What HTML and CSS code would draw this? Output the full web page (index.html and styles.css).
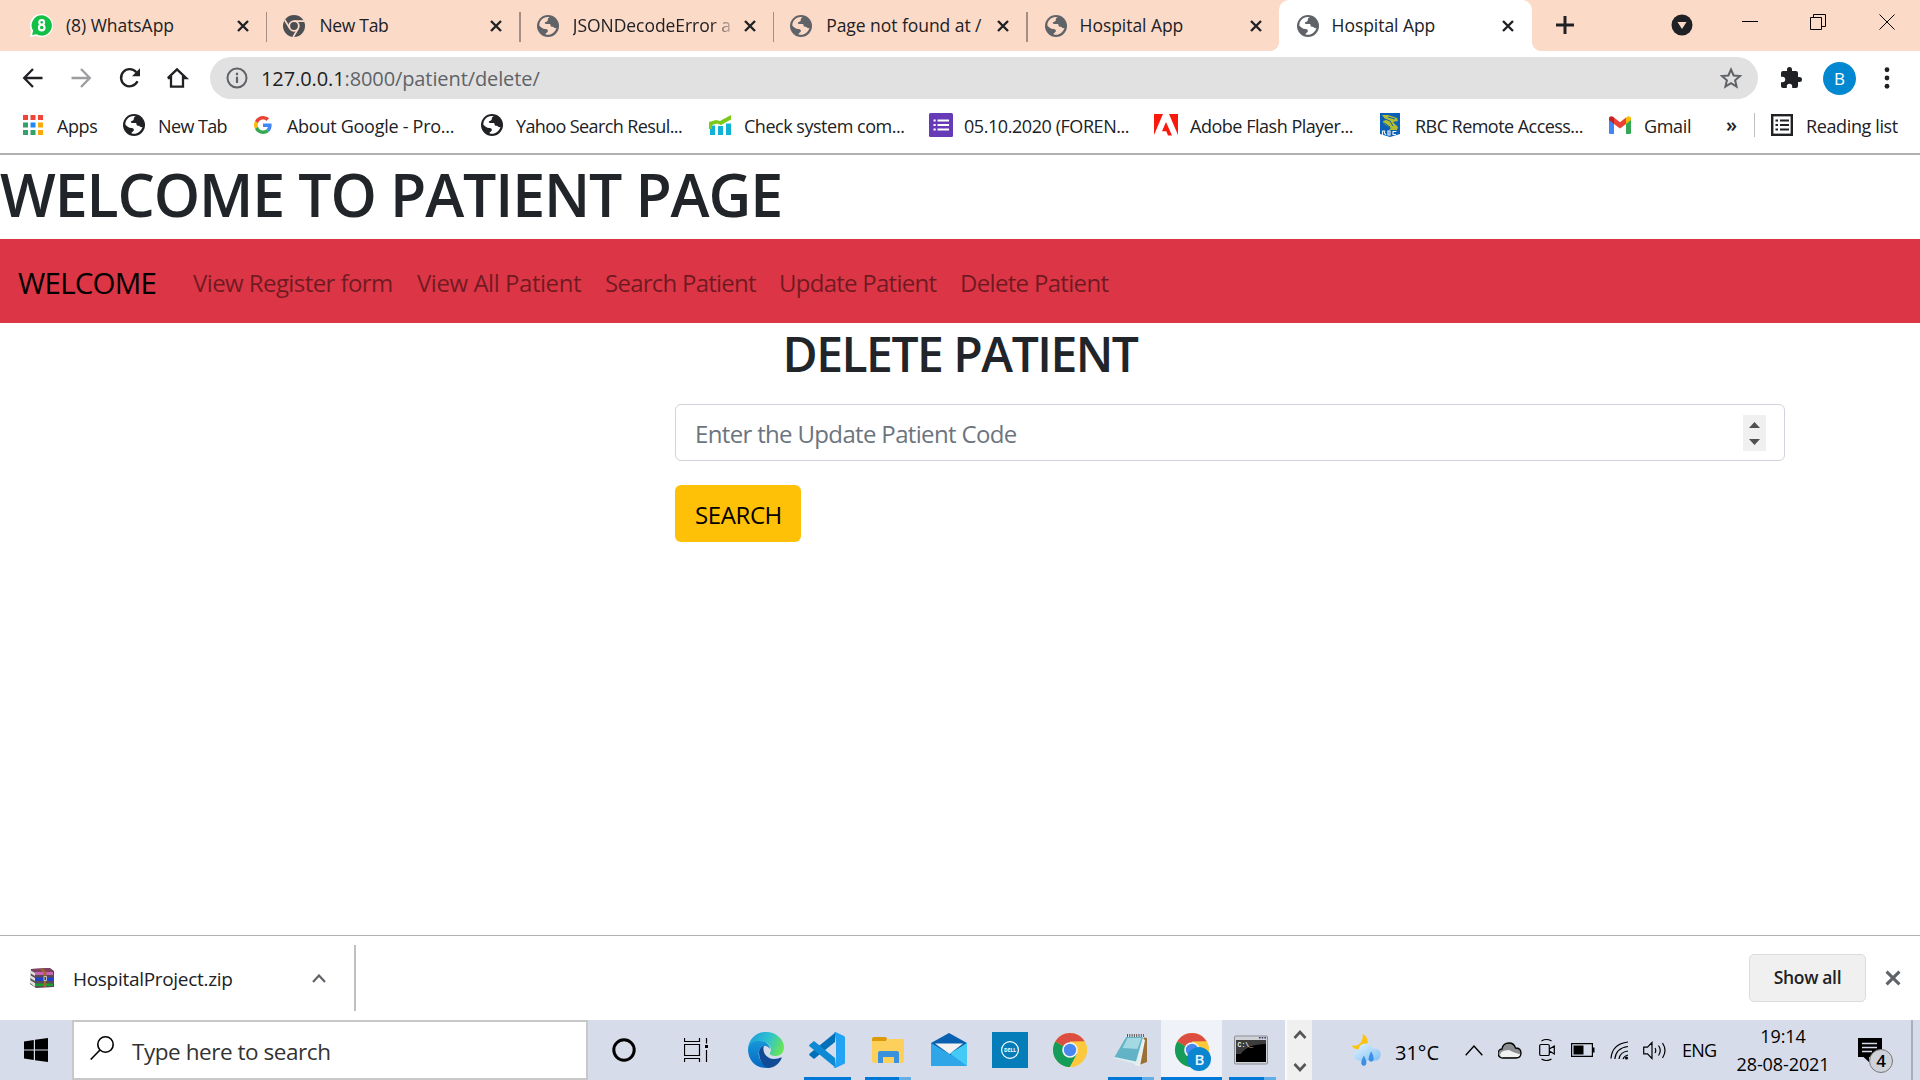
FILE: index.html
```
<!DOCTYPE html>
<html lang="en">
<head>
<meta charset="utf-8">
<title>Hospital App</title>
<link rel="stylesheet" href="styles.css">
</head>
<body>
<svg width="0" height="0" class="defs" aria-hidden="true">
  <symbol id="globe" viewBox="0 0 22 22"><circle cx="11" cy="11" r="11" fill="currentColor"/><path d="M12.800 2.200c-1.200.5-2.200 1.300-2 2.600.1 1-.5 1.800-1.500 2-.9.1-1.500.6-1.500 1.300 0 .8 1 1 2.300 1h2.400c.8 0 1.100.7 1.100 1.500 0 .9.6 1.300 1.500 1.100 1-.2 1.500.1 1.900.8.3.6 1.200.9 2.500.6-.9 3.400-3.600 5.900-7 6.600-1.200.2-3 .1-4-.5.2-.9 1-1.300 1.700-1.900.7-.7.900-1.500.4-2.300-.5-.7-1.400-.9-2.500-1-2.200-.2-3.800-1.200-5.700-3.200C1.900 6.300 6 2 10.600 2z" fill="var(--hole,#fff)"/></symbol>
  <symbol id="x" viewBox="0 0 14 14"><path d="M2 2l10 10M12 2L2 12" stroke="currentColor" stroke-width="2.400" fill="none"/></symbol>
  <symbol id="chrome" viewBox="0 0 34 34"><circle cx="17" cy="17" r="17" fill="#fcca3f"/><path d="M17 17L2.280 8.500A17 17 0 0 1 31.720 8.500L17 9z" fill="#dc4e41"/><path d="M2.280 8.500A17 17 0 0 0 17 34L24 21 17 17 10 13z" fill="#159c58"/><path d="M31.720 8.500H17v8.500l7 4L17 34A17 17 0 0 0 31.720 8.500z" fill="#fdc93c"/><circle cx="17" cy="17" r="7.800" fill="#f4f4f4"/><circle cx="17" cy="17" r="6.200" fill="#4a86f0"/></symbol>
</svg>

<header class="tabstrip">
  <div class="tab">
    <svg class="fav" viewBox="0 0 22 22"><path d="M11 0a11 11 0 1 1-5 20.800L0 22l1.300-5.500A11 11 0 0 1 11 0z" fill="#fff"/><path d="M11.200 1.300a9.700 9.700 0 1 1-5 18L2 20.200l1-4.100a9.700 9.700 0 0 1 8.200-14.800z" fill="#13bf45"/><circle cx="11.200" cy="8" r="2.300" fill="none" stroke="#fff" stroke-width="2"/><circle cx="11.200" cy="13" r="2.700" fill="none" stroke="#fff" stroke-width="2"/></svg>
    <span class="label t1">(8) WhatsApp</span><svg class="close"><use href="#x"/></svg>
  </div>
  <div class="tab">
    <svg class="fav" viewBox="0 0 22 22"><circle cx="11" cy="11" r="11" fill="#4b4e52"/><circle cx="11" cy="11" r="4.800" fill="none" stroke="#fcdac8" stroke-width="1.800"/><path d="M11 6.200H21M6.800 13.400L1.800 5M15.200 13.400L10.200 22" stroke="#fcdac8" stroke-width="1.700"/></svg>
    <span class="label t2">New Tab</span><svg class="close"><use href="#x"/></svg>
  </div>
  <div class="tab"><svg class="fav"><use href="#globe"/></svg><span class="label t3 fade">JSONDecodeError a</span><svg class="close"><use href="#x"/></svg></div>
  <div class="tab"><svg class="fav"><use href="#globe"/></svg><span class="label t4">Page not found at /</span><svg class="close"><use href="#x"/></svg></div>
  <div class="tab last"><svg class="fav"><use href="#globe"/></svg><span class="label t5">Hospital App</span><svg class="close"><use href="#x"/></svg></div>
  <div class="tab active"><svg class="fav"><use href="#globe"/></svg><span class="label t5">Hospital App</span><svg class="close"><use href="#x"/></svg></div>
  <svg class="newtab" viewBox="0 0 18 18"><path d="M9 0v18M0 9h18" stroke="#202124" stroke-width="3"/></svg>
  <svg class="search-tabs" viewBox="0 0 22 22"><circle cx="11" cy="11" r="10.500" fill="#202124"/><path d="M6.500 8h9L11 15z" fill="#fcdac8"/></svg>
  <div class="winbtns">
    <svg viewBox="0 0 16 16"><path d="M0 7.500h16" stroke="#000"/></svg>
    <svg viewBox="0 0 16 16"><path d="M.5 3.500h11v12H.5zM3.500 3.500v-3h12v12h-4" stroke="#000" fill="none"/></svg>
    <svg viewBox="0 0 16 16"><path d="M.5.5l15 15M15.500.5l-15 15" stroke="#000"/></svg>
  </div>
</header>

<div class="toolbar">
  <nav class="navicons">
    <svg viewBox="0 0 20 20"><path d="M19.500 10H1.500M10 1L1.200 10 10 19" stroke="#202124" stroke-width="2.300" fill="none"/></svg>
    <svg viewBox="0 0 20 20"><path d="M.5 10h18M10 1l8.800 9L10 19" stroke="#9b9da0" stroke-width="2.300" fill="none"/></svg>
    <svg viewBox="0 0 20 20"><path d="M18.500 13.300A8.600 8.600 0 1 1 17.300 4.200" stroke="#202124" stroke-width="2.400" fill="none"/><path d="M21 .3v8h-8z" fill="#202124"/></svg>
    <svg viewBox="0 0 20 20"><path d="M4 8v10.700h12V8M.8 10.200L10 1.400l9.200 8.800h-3.200M.8 10.200H4" stroke="#202124" stroke-width="2.300" fill="none"/></svg>
  </nav>
  <div class="omnibox">
    <svg class="info" viewBox="0 0 22 22"><circle cx="11" cy="11" r="9.500" fill="none" stroke="#5f6368" stroke-width="2"/><path d="M11 9.800V16M11 5.800v2.400" stroke="#5f6368" stroke-width="2.200"/></svg>
    <span class="url"><b>127.0.0.1</b>:8000/patient/delete/</span>
    <svg class="star" viewBox="0 0 24 24"><path d="M12 3.500l2.600 6 6.400.6-4.900 4.200 1.500 6.300-5.600-3.400-5.600 3.400 1.500-6.300L3 10.100l6.400-.6z" stroke="#5f6368" stroke-width="2" fill="none"/></svg>
  </div>
  <svg class="puzzle" viewBox="1 1 22 22"><path d="M20.500 11H19V7a2 2 0 0 0-2-2h-4V3.500a2.500 2.500 0 0 0-5 0V5H4a2 2 0 0 0-2 2v3.800h1.500a2.700 2.700 0 0 1 0 5.400H2V20c0 1.100.9 2 2 2h3.800v-1.500a2.700 2.700 0 0 1 5.400 0V22H17a2 2 0 0 0 2-2v-4h1.500a2.500 2.500 0 0 0 0-5z" fill="#202124"/></svg>
  <span class="avatar">B</span>
  <svg class="dots" viewBox="0 0 6 24"><circle cx="3" cy="3" r="2.600"/><circle cx="3" cy="12" r="2.600"/><circle cx="3" cy="21" r="2.600"/></svg>
</div>

<div class="bookmarks">
  <a class="bm b1"><svg viewBox="0 0 20 20"><path d="M0 0h5v5H0zM7.500 0h5v5h-5zM15 0h5v5h-5z" fill="#f04438"/><path d="M0 7.500h5v5H0zM0 15h5v5H0zM7.500 15h5v5h-5z" fill="#34a06a"/><path d="M7.500 7.500h5v5h-5z" fill="#1e88f5"/><path d="M15 7.500h5v5h-5zM15 15h5v5h-5z" fill="#f7ab0b"/></svg><span>Apps</span></a>
  <a class="bm b2"><svg><use href="#globe"/></svg><span>New Tab</span></a>
  <a class="bm b3"><svg viewBox="0 0 48 48"><path fill="#EA4335" d="M24 9.500c3.540 0 6.710 1.220 9.210 3.600l6.850-6.850C35.900 2.380 30.470 0 24 0 14.620 0 6.510 5.380 2.560 13.220l7.980 6.190C12.430 13.720 17.740 9.500 24 9.500z"/><path fill="#4285F4" d="M46.980 24.550c0-1.570-.15-3.090-.38-4.550H24v9.020h12.940c-.58 2.960-2.260 5.480-4.780 7.180l7.730 6c4.510-4.180 7.090-10.360 7.090-17.650z"/><path fill="#FBBC05" d="M10.530 28.590c-.48-1.450-.76-2.990-.76-4.590s.27-3.140.76-4.590l-7.980-6.190C.92 16.460 0 20.120 0 24s.92 7.540 2.560 10.780z"/><path fill="#34A853" d="M24 48c6.480 0 11.930-2.130 15.890-5.810l-7.730-6c-2.150 1.450-4.920 2.300-8.160 2.300-6.260 0-11.570-4.220-13.470-9.910l-7.980 6.190C6.510 42.620 14.620 48 24 48z"/></svg><span>About Google - Pro...</span></a>
  <a class="bm b4"><svg><use href="#globe"/></svg><span>Yahoo Search Resul...</span></a>
  <a class="bm b5"><svg viewBox="0 0 22 20"><path d="M1 10.500h5V20H1zM9 11h5v9H9zM17 8.500h5V20h-5z" fill="#11b3d5"/><path d="M0 7l7-2 4 1L22 0v4.500L12 10 8 8.500 3 10v4H0z" fill="#7ac916"/></svg><span>Check system com...</span></a>
  <a class="bm b6"><svg viewBox="0 0 24 24"><rect width="24" height="24" rx="1.500" fill="#673ab7"/><path d="M8.500 7.500H20M8.500 12H20M8.500 16.500H20M4.500 7.500h2.200M4.500 12h2.200M4.500 16.500h2.200" stroke="#fff" stroke-width="2"/></svg><span>05.10.2020 (FOREN...</span></a>
  <a class="bm b7"><svg viewBox="0 0 24 22"><path d="M0 0h9L0 21zM15 0h9v21zM12 8l6 13.500h-4l-1.700-4.300H8z" fill="#fa1a0d"/></svg><span>Adobe Flash Player...</span></a>
  <a class="bm b8"><svg viewBox="0 0 20 24"><path d="M0 0h20v21l-10 3-10-3z" fill="#0b5fb4"/><path d="M2 2l6 0 9 3 1 3-5 1 5 5-1 3H9l2-2-7-4-1-3 3-1z" fill="#b3bd2e"/><path d="M5 6l5 2 3 5M8 4l7 2M4 10l6 4" stroke="#0b5fb4" fill="none"/><path d="M2.500 22v-4h2v2l1.500 2M8 22v-4h2v4zM16.500 18.500h-3.500v3h3" stroke="#e8f0fa" stroke-width="1.200" fill="none"/></svg><span>RBC Remote Access...</span></a>
  <a class="bm b9"><svg viewBox="0 0 22 18" preserveAspectRatio="none"><path d="M0 3v14q0 1 1 1h4V7z" fill="#4285f4"/><path d="M22 3v14q0 1-1 1h-4V7z" fill="#34a853"/><path d="M17 2v6l5-4V2.500C22 .3 19.500-.5 18 .7z" fill="#fbbc04"/><path d="M5 8V1.500l6 4.700 6-4.700V8l-6 4.500z" fill="#ea4335"/><path d="M0 2.500V4l5 4V1.500L4 .7C2.400-.5 0 .3 0 2.500z" fill="#c5221f"/></svg><span>Gmail</span></a>
  <span class="more">»</span>
  <a class="bm reading"><svg viewBox="0 0 22 22"><rect x="1.200" y="1.200" width="19.600" height="19.600" fill="none" stroke="#202124" stroke-width="2.400"/><path d="M9 6.500h9M9 11h9M9 15.500h9M4.500 6.500H7M4.500 11H7M4.500 15.500H7" stroke="#202124" stroke-width="2.200"/></svg><span>Reading list</span></a>
</div>

<main class="page">
  <h1>WELCOME TO PATIENT PAGE</h1>
  <nav class="navbar">
    <a class="brand">WELCOME</a>
    <a class="n1">View Register form</a><a class="n2">View All Patient</a><a class="n3">Search Patient</a><a class="n4">Update Patient</a><a class="n5">Delete Patient</a>
  </nav>
  <h2>DELETE PATIENT</h2>
  <form class="form">
    <div class="field"><span class="ph">Enter the Update Patient Code</span>
      <svg class="spin" viewBox="0 0 23 36"><rect width="23" height="36" fill="#f0f0f0"/><path d="M6 13h11l-5.500-6zM6 24h11l-5.500 6z" fill="#505050"/></svg></div>
    <div class="btn"><span>SEARCH</span></div>
  </form>
</main>

<footer class="downloads">
  <svg class="zip" viewBox="0 0 24 20"><path d="M1 1l19-1 4 3v16l-18 1-6-4z" fill="#5b4a52"/><path d="M1 1l18-1 4 3v3H6z" fill="#80405f"/><path d="M5 4h18v3H5z" fill="#c763b5"/><path d="M5 9.500h18v3.500H5z" fill="#2040d0"/><path d="M5 15.500h18V18H5z" fill="#16a030"/><path d="M0 2l5 3v3L0 5zM0 7l5 3v3L0 10zM0 12l5 3v4l-5-4z" fill="#e0e0e0"/><path d="M11 1l4 3v15" stroke="#a8622c" stroke-width="2.400" fill="none"/><path d="M14 8.500h2.500v4H14z" fill="#444" stroke="#ddd" stroke-width=".8"/></svg>
  <span class="file">HospitalProject.zip</span>
  <svg class="caret" viewBox="0 0 14 9"><path d="M1 8l6-6.500L13 8" stroke="#5f6368" stroke-width="2.200" fill="none"/></svg>
  <span class="showall"><span>Show all</span></span>
  <svg class="dclose"><use href="#x"/></svg>
</footer>

<div class="taskbar">
  <div class="start"><svg viewBox="0 0 24 24"><path d="M0 3.400L9.800 2v9.500H0zM11 1.800L24 0v11.500H11zM0 12.500h9.800V22L0 20.600zM11 12.500h13V24l-13-1.800z"/></svg></div>
  <div class="searchbox"><svg viewBox="0 0 24 24"><circle cx="15.500" cy="8.500" r="7.700" fill="none" stroke="#000" stroke-width="1.600"/><path d="M10 14L.7 23.500" stroke="#000" stroke-width="1.600"/></svg><span>Type here to search</span></div>
  <div class="sys"><svg viewBox="0 0 24 24"><circle cx="12" cy="12" r="10.200" fill="none" stroke="#000" stroke-width="3"/></svg></div>
  <div class="sys view"><svg viewBox="0 0 24 24"><path d="M.5 0v3.500h15V0M.5 6.500h15v11H.5zM.5 24v-3.500h15V24M22.500 0v5.500M22.500 12v12" fill="none" stroke="#000" stroke-width="1.200"/><path d="M21 7h3v3h-3z"/></svg></div>
  <div class="apps">
    <div class="app"><svg viewBox="0 0 36 36"><defs><linearGradient id="eg" x1="0" x2="1" y1=".2" y2=".5"><stop stop-color="#1c9bdc"/><stop offset=".55" stop-color="#30c2d0"/><stop offset="1" stop-color="#66e45a"/></linearGradient><linearGradient id="eb" x1="0" x2="0" y1="0" y2="1"><stop stop-color="#1797d8"/><stop offset="1" stop-color="#0568c4"/></linearGradient></defs><path d="M0 17C1 6 9 0 18 0c11 0 18 8 18 15 0 6-4 9-8.500 9-5 0-6.500-2-5.300-3.700C24 17 22 11 15 10 8 9 3 12 0 17z" fill="url(#eg)"/><path d="M0 17.500C1 11 7 8.500 12 9c6 .4 10 4 10 8-1-2-3.500-3.500-6-3-4 1-6 5-5 10 1 6 6 10 11 11.500C9 38 0 29 0 17.500z" fill="url(#eb)"/><path d="M11 21c0-4 2-6.500 5-7-2 4 1 13 10 13 3 0 5-.9 7-1.500.7-.2.900.3.500 1C31 32 26 36 20 36c-5-2-9-8-9-15z" fill="#114a95"/></svg></div>
    <div class="app run"><svg viewBox="0 0 36 36"><path d="M27 0l-1 10L5 27l-4.300-3.600a1.500 1.500 0 0 1 0-2z" fill="#0071b8"/><path d="M27 36l-1-10L5 9 .7 12.400a1.500 1.500 0 0 0 0 2.200z" fill="#0d8ad3"/><path d="M25 .5q1-.8 2-.3L35 4q1 .5 1 1.500v25q0 1-1 1.500l-8 3.800q-1.500.5-2.500-.7L27 34V2z" fill="#23a3f4"/></svg><i></i></div>
    <div class="app run multi"><svg viewBox="0 0 36 36"><path d="M2 7q0-2 2-2h11q2 0 2 2l-2 4H2z" fill="#dd9a06"/><path d="M2 9h14l2-2h16v22q0 2-2 2H4q-2 0-2-2z" fill="#fcd05a"/><path d="M8 31V21q0-2 2-2h17q2 0 2 2v10h-5v-6H13v6z" fill="#3a91dc"/></svg><i></i></div>
    <div class="app"><svg viewBox="0 0 36 36"><path d="M0 11L18 1l18 10v22H0z" fill="#0a60b0"/><path d="M0 11l20 12L36 11v23H0z" fill="#2fa6e8"/><path d="M36 11L19 21.500 36 34z" fill="#43cbf6"/><path d="M4 11.500h28L18.500 22z" fill="#f2f2f2"/></svg></div>
    <div class="app"><svg viewBox="0 0 36 36"><path d="M0 0h36v36H0z" fill="#047db9"/><circle cx="18" cy="18" r="8.400" fill="none" stroke="#fff" stroke-width="1.200"/><text x="18" y="20.200" class="dell" textLength="12">DELL</text></svg></div>
    <div class="app"><svg class="c34"><use href="#chrome"/></svg></div>
    <div class="app run multi"><svg viewBox="0 0 36 36"><path d="M29 5l5 1v24l-8 3z" fill="#9a7138"/><path d="M27 5l5 3-5 26-5-1z" fill="#f2f2ee"/><path d="M13 4h18l-5 29L1 26z" fill="#dfeef0"/><path d="M13 5h17l-7 24.500L1.500 25z" fill="#62b3c5"/><path d="M14.500 6h14l-4 11-15-1z" fill="#a3d9e2"/><path d="M14 3.500h17" stroke="#555" stroke-width="3" stroke-dasharray="1 1.300"/></svg><i></i></div>
    <div class="app run current"><svg class="c34"><use href="#chrome"/></svg><b>B</b><i></i></div>
    <div class="app run multi cmdapp"><svg viewBox="0 0 36 36"><rect x="1.500" y="4" width="33" height="28" rx="1" fill="#cfd2d6" stroke="#8b8e92"/><path d="M3 8h30v22H3z"/><path d="M3 8h30v4Q14 12 8 22H3z" fill="#3c3c3c"/><text x="4.500" y="15" class="cmd">C:\_</text><path d="M26 5.800h7" stroke="#336" stroke-width="1.500" stroke-dasharray="1.500 1.200"/></svg><i></i></div>
  </div>
  <div class="scroll"><svg viewBox="0 0 14 9"><path d="M1.500 8L7 2l5.500 6" stroke="#555" stroke-width="2.600" fill="none"/></svg><svg viewBox="0 0 14 9"><path d="M1.500 1L7 7l5.500-6" stroke="#555" stroke-width="2.600" fill="none"/></svg></div>
  <div class="tray">
    <svg class="weather" viewBox="0 0 34 37"><defs><linearGradient id="wc" x1="0" x2="1" y1="0" y2="1"><stop stop-color="#e4f4ff"/><stop offset="1" stop-color="#7fc0f5"/></linearGradient></defs><path d="M13 0q6 3 6 9 0 9-9 9-7 0-10-5 7 2 10.500-2.500Q14 6 13 0z" fill="#fbc30f"/><path d="M10 31q-7 0-7.500-6 0-5.500 5.500-6 1-8 9-8 6 0 8 6 8-1 9 6 0 8-8 8z" fill="url(#wc)"/><path d="M14.500 25q6 11 0 12-6-1 0-12zM23 20q6 11 0 12-6-1 0-12z" fill="#3b8fe6"/></svg>
    <span class="temp">31°C</span>
    <svg class="up" viewBox="0 0 18 11"><path d="M.7 10.300L9 1l8.300 9.300" fill="none" stroke="#000" stroke-width="1.400"/></svg>
    <svg class="cloud" viewBox="0 0 24 17"><path d="M5 16a4.400 4.400 0 0 1-1-9Q5 1 11 1q5 0 6.500 5 5.500 0 5.500 5t-5 5z" fill="#8b8d90"/><path d="M2 12.500q1.500-3.500 5-4l4-.5 4 2 7.500 2.500q-1 3-4 3H5q-2.500 0-3-3z" fill="#f1f1f1"/><path d="M5 16a4.400 4.400 0 0 1-1-9Q5 1 11 1q5 0 6.500 5 5.500 0 5.500 5t-5 5z" fill="none" stroke="#000" stroke-width="1.300"/></svg>
    <svg class="meet" viewBox="0 0 16 22"><path d="M2.500 2q5-3 10 0M2.500 20q5 3 10 0M2 5.500h7q1.300 0 1.300 1.300v8.400q0 1.300-1.300 1.300H2q-1.300 0-1.300-1.300V6.800Q.7 5.500 2 5.500zM10.300 10l5-3v8l-5-3" fill="none" stroke="#000" stroke-width="1.200"/></svg>
    <svg class="batt" viewBox="0 0 24 14"><path d="M.6.600h20.800v12.800H.6z" fill="none" stroke="#000" stroke-width="1.200"/><path d="M2.500 2.500h10v9h-10zM22 4.500h1.500v5H22z"/></svg>
    <svg class="wifi" viewBox="0 0 19 19"><path d="M1 17.500Q2 3 18 1M4.800 18Q6 7 18 5.500M9 18q1-7 9-8M13 18q1-3 5-4" fill="none" stroke="#000" stroke-width="1.200"/><circle cx="16.500" cy="17" r="1.600"/></svg>
    <svg class="snd" viewBox="0 0 24 19"><path d="M.7 6.200h3.800L9 1.500v16l-4.500-4.700H.7zM12 7q1.500 2.500 0 5M15.500 4.500q3.500 5 0 10M19.500 2q5 7.500 0 15" fill="none" stroke="#000" stroke-width="1.200"/></svg>
    <span class="eng">ENG</span>
    <div class="clock"><span>19:14</span><span class="date">28-08-2021</span></div>
    <div class="notif"><svg viewBox="0 0 24 24"><path d="M0 0h24v19H11v5l-5.500-5H0z"/><path d="M4 5.500h15M4 9.500h15M4 13.500h10" stroke="#d6dcea" stroke-width="1.300"/></svg><b>4</b></div>
  </div>
</div>
</body>
</html>
```
FILE: styles.css
```
* { box-sizing: border-box; }
body { margin: 0; width: 1920px; height: 1080px; overflow: hidden; display: flex; flex-direction: column; background: #fff; color: #202124; font-family: "Open Sans", "Noto Sans", sans-serif; font-size: 18px; white-space: nowrap; }
svg { display: block; flex: none; }
.defs { position: absolute; }

/* tab strip */
.tabstrip { height: 51px; flex: none; display: flex; background: #fcdac8; padding-left: 14px; --hole: #fcdac8; }
.tab { width: 253.400px; height: 51px; flex: none; display: flex; align-items: center; padding: 0 16px; position: relative; }
.tab::after { content: ""; position: absolute; right: 0; top: 12px; width: 1.500px; height: 30px; background: #a58f85; }
.tab.last::after, .tab.active::after { display: none; }
.fav { width: 22px; height: 22px; color: #5f6368; }
.tab:first-child .fav { width: 23px; height: 23px; margin-right: -1px; }
.label { width: 163px; margin: -1px 0 0 14px; line-height: 30px; font-size: 17.500px; letter-spacing: -.05px; }
.t2 { letter-spacing: -.3px; }
.fade { -webkit-mask-image: linear-gradient(90deg, #000 138px, transparent 164px); mask-image: linear-gradient(90deg, #000 138px, transparent 164px); }
.close { width: 14px; height: 14px; margin-left: 7px; }
.tab.last { width: 251px; padding: 0 12px 0 17px; }
.tab.last .label { width: 162px; margin-left: 13px; }
.tab.active { width: 253px; padding: 0 16px 0 18px; background: #fff; border-radius: 10px 10px 0 0; --hole: #fff; }
.tab.active .label { width: 162px; margin-left: 13px; }
.active::before { content: ""; position: absolute; bottom: 0; left: -10px; right: -10px; height: 10px; background: radial-gradient(circle at 0 0, transparent 10px, #fff 10.500px) left / 10px 10px no-repeat, radial-gradient(circle at 10px 0, transparent 10px, #fff 10.500px) right / 10px 10px no-repeat; }
.newtab { width: 18px; height: 18px; margin: 16px 0 0 24px; }
.search-tabs { width: 22px; height: 22px; margin: 14px 0 0 97px; }
.winbtns { display: flex; gap: 52.500px; margin: 14px 0 0 49px; }
.winbtns svg { width: 16px; height: 16px; }

/* toolbar */
.toolbar { height: 54px; flex: none; display: flex; align-items: center; padding-left: 23px; }
.navicons { display: flex; gap: 28px; width: 187px; }
.navicons svg { width: 20px; height: 20px; overflow: visible; }
.omnibox { width: 1548px; height: 42px; border-radius: 21px; background: #e1e1e1; display: flex; align-items: center; padding: 0 15px 0 16px; }
.info { width: 22px; height: 22px; }
.url { flex: 1; margin-left: 13px; font-size: 20px; letter-spacing: -.1px; color: #5f6368; }
.url b { font-weight: 400; color: #202124; }
.star { width: 24px; height: 26px; }
.puzzle { width: 22px; height: 22px; margin-left: 22px; }
.avatar { width: 33px; height: 33px; margin-left: 21px; border-radius: 50%; background: #0288d1; color: #fff; font-size: 17px; line-height: 33px; text-align: center; }
.dots { width: 6px; height: 22px; margin-left: 28px; fill: #202124; }

/* bookmarks */
.bookmarks { height: 50px; flex: none; display: flex; align-items: center; padding: 0 0 8px 23px; border-bottom: 2px solid #b1b1b1; letter-spacing: -.48px; }
.bm { display: flex; align-items: center; flex: none; }
.bm span { margin-top: 1px; }
.bm svg { width: 22px; height: 22px; margin-right: 13px; }
.b1 { width: 100px; letter-spacing: -.4px; } .b1 svg { width: 20px; height: 20px; margin-right: 14px; }
.b2 { width: 129px; letter-spacing: -.6px; }
.b3 { width: 229px; letter-spacing: -.27px; } .b3 svg { width: 18px; height: 18px; margin: 0 15px 0 2px; }
.b4 { width: 228px; letter-spacing: -.6px; }
.b5 { width: 220px; } .b5 svg { height: 20px; }
.b6 { width: 225px; letter-spacing: -.44px; } .b6 svg { width: 24px; height: 24px; margin-right: 11px; }
.b7 { width: 226px; } .b7 svg { width: 24px; margin-right: 12px; }
.b8 { width: 229px; letter-spacing: -.54px; } .b8 svg { width: 20px; height: 24px; margin-right: 15px; }
.b9 { width: 117px; letter-spacing: -.35px; } .b9 svg { height: 18px; }
.more { width: 28px; font-size: 20px; font-weight: 600; line-height: 20px; }
.reading { height: 24px; border-left: 1.500px solid #c0c0c0; padding-left: 16px; letter-spacing: -.38px; }

/* page */
.page { height: 780px; flex: none; color: #212529; }
h1 { margin: 0; height: 84px; font-size: 59px; font-weight: 600; line-height: 78px; letter-spacing: -1.120px; }
.navbar { height: 84px; background: #dc3545; display: flex; align-items: center; padding: 2px 0 0 18px; font-size: 24px; color: rgba(0,0,0,.5); }
.navbar a { flex: none; }
.brand { width: 175px; font-size: 29.500px; letter-spacing: -.75px; color: #000; }
.n1 { width: 224px; letter-spacing: -.58px; } .n2 { width: 188px; letter-spacing: -.46px; } .n3 { width: 174px; letter-spacing: -.75px; } .n4 { width: 181px; letter-spacing: -.74px; } .n5 { letter-spacing: -.68px; }
h2 { margin: 0; height: 81px; font-size: 48px; font-weight: 600; line-height: 61px; text-align: center; letter-spacing: -1.480px; }
.form { margin-left: 675px; width: 1110px; font-size: 24px; }
.field { height: 57px; border: 1.500px solid #ced4da; border-radius: 6px; padding: 1px 18px 0 19px; display: flex; align-items: center; justify-content: space-between; color: #6c757d; letter-spacing: -.66px; }
.spin { width: 23px; height: 36px; margin-top: -1px; }
.btn { margin-top: 24px; width: 126px; height: 57px; border-radius: 6px; background: #ffc107; color: #000; padding: 2px 0 0 20px; line-height: 55px; letter-spacing: -.4px; }

/* download shelf */
.downloads { height: 85px; flex: none; border-top: 1px solid #b0b0b0; display: flex; align-items: center; padding-left: 30px; }
.zip { width: 24px; height: 20px; }
.file { margin-left: 19px; width: 239px; font-size: 19px; padding-top: 2px; letter-spacing: -.3px; }
.caret { width: 14px; height: 9px; }
.downloads::before { content: ""; order: 1; margin-left: 28px; width: 2px; height: 66px; background: #c0c0c0; }
.showall, .dclose { order: 2; }
.showall { margin: -1px 0 0 1393px; width: 117px; height: 48px; border: 1px solid #dadce0; border-radius: 5px; background: #f0f0f0; text-align: center; line-height: 45px; font-size: 17.500px; font-weight: 600; letter-spacing: -.35px; }
.dclose { width: 18px; height: 18px; margin-left: 18px; color: #5f6368; }

/* taskbar */
.taskbar { height: 60px; flex: none; background: #d6dcea; display: flex; color: #000; }
.start { width: 72px; padding: 18px 0 0 24px; }
.start svg { width: 24px; height: 24px; }
.searchbox { width: 516px; background: #fff; border: 2px solid #c8c8c8; display: flex; align-items: center; padding: 2px 0 0 16px; font-size: 22.500px; letter-spacing: -.45px; color: #333; }
.searchbox svg { width: 24px; height: 24px; margin: -7px 18px 0 0; }
.sys { width: 72px; padding: 18px 0 0 24px; }
.sys svg { width: 24px; height: 24px; }
.view { width: 76px; }
.apps { display: flex; width: 547px; }
.app { flex: 1; position: relative; display: flex; align-items: center; justify-content: center; }
.app svg { width: 36px; height: 36px; }
.app svg.c34 { width: 34px; height: 34px; }
.app i { position: absolute; bottom: 0; left: 7px; right: 7px; height: 3px; background: #0078d7; }
.multi i { border-right: 12px solid #63aee6; }
.cmdapp svg { margin-left: -3px; }
.current { background: #eff2f9; }
.current i { left: 0; right: 0; }
.current b { position: absolute; left: 26px; top: 27px; width: 24px; height: 24px; border-radius: 50%; background: #0a86d0; color: #e8f4ff; font-size: 15px; font-weight: 600; line-height: 24px; text-align: center; }
.dell { font: 700 5px "Open Sans", sans-serif; fill: #fff; text-anchor: middle; }
.cmd { font: 700 6.500px "Liberation Mono", monospace; fill: #eee; }
.scroll { width: 27px; margin-left: 2px; background: #f0f0f0; border-left: 2px solid #fafafa; display: flex; flex-direction: column; justify-content: space-between; align-items: center; padding: 10px 0 8px; }
.scroll svg { width: 14px; height: 9px; }
.tray { flex: 1; display: flex; align-items: center; padding-left: 37px; }
.weather { width: 34px; height: 32px; }
.temp { width: 70px; margin-left: 12px; font-size: 20px; padding-top: 4px; }
.up { width: 18px; height: 11px; }
.cloud { width: 24px; height: 17px; margin-left: 15px; }
.meet { width: 16px; height: 22px; margin-left: 17px; }
.batt { width: 24px; height: 14px; margin-left: 16px; }
.wifi { width: 19px; height: 19px; margin-left: 15px; }
.snd { width: 24px; height: 19px; margin-left: 14px; }
.eng { width: 54px; margin-left: 15px; font-size: 18px; letter-spacing: -.8px; }
.clock { width: 94px; display: flex; flex-direction: column; align-items: center; font-size: 18px; line-height: 28px; margin-top: -1px; letter-spacing: -.1px; }
.notif { position: relative; width: 55px; margin-left: 28px; align-self: stretch; padding-top: 18px; border-right: 2px solid #a9afbe; }
.notif svg { width: 24px; height: 24px; }
.notif b { position: absolute; left: 11px; top: 29px; width: 24px; height: 24px; border-radius: 50%; border: 1.500px solid #777; background: #cfd2d8; font-size: 17px; font-weight: 600; line-height: 22px; text-align: center; }
```
